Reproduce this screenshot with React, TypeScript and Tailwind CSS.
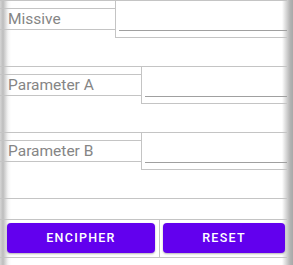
import React from 'react';

const Row: React.FC<{ label: string; labelWidth: string; className?: string }> = ({ label, labelWidth, className = '' }) => (
  <div className={`flex border-t border-[#c4c4c4] w-[287px] ${className}`}>
    <div className={`${labelWidth} shrink-0 pt-[7px]`}>
      <div className="h-[22px] border-y border-[#c4c4c4] pl-[8px] text-[15.5px] leading-[20px] text-[#858585]">
        {label}
      </div>
    </div>
    <div className="flex-1 h-[37px] border-l border-b border-[#c4c4c4] pt-[29px] pl-[3px]">
      <div className="h-px bg-[#a0a0a0]" />
    </div>
  </div>
);

export default function App() {
  return (
    <div
      className="w-[293px] h-[265px] overflow-hidden bg-[linear-gradient(to_right,#d6d6d6_0px,#bdbdbd_3px,#f4f4f4_8px,#ffffff_11px,#ffffff_282px,#e2e2e2_285px,#b4b4b4_290px,#a8a8a8_293px)]"
      style={{ fontFamily: 'Roboto, "Noto Sans", sans-serif' }}
    >
      <Row label="Missive" labelWidth="w-[115px]" />
      <Row label="Parameter A" labelWidth="w-[141px]" className="mt-[28px]" />
      <Row label="Parameter B" labelWidth="w-[141px]" className="mt-[28px]" />
      <div className="mt-[28px] w-[287px] h-[21px] border-t border-[#c4c4c4]" />
      <div className="flex w-[287px] h-[39px] border-y border-[#c4c4c4]">
        <div className="w-[160px] border-r border-[#c4c4c4] pl-[7px] pr-[4px] pt-[3px]">
          <button className="w-full h-[30px] rounded-[4px] bg-[#6200ee] text-white text-[12.5px] font-medium tracking-[0.1em] shadow-[0_1px_2px_rgba(0,0,0,0.3)]">
            ENCIPHER
          </button>
        </div>
        <div className="flex-1 pl-[3px] pt-[3px]">
          <button className="w-[122px] h-[30px] rounded-[4px] bg-[#6200ee] text-white text-[12.5px] font-medium tracking-[0.1em] shadow-[0_1px_2px_rgba(0,0,0,0.3)]">
            RESET
          </button>
        </div>
      </div>
    </div>
  );
}
